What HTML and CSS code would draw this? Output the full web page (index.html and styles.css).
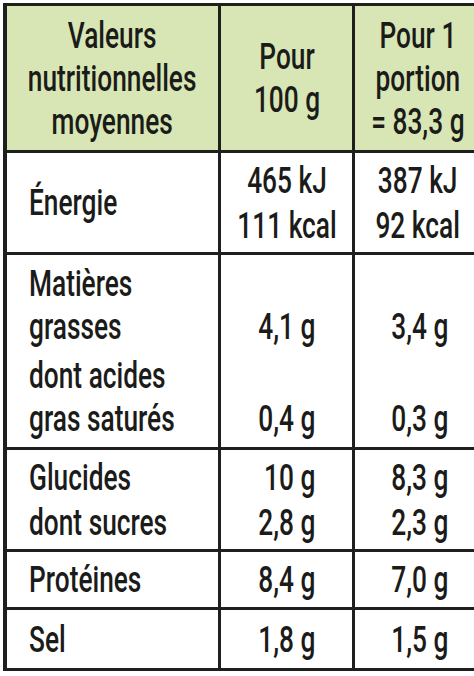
FILE: index.html
```html
<!DOCTYPE html>
<html lang="fr">
<head>
<meta charset="utf-8">
<title>Valeurs nutritionnelles</title>
<link rel="stylesheet" href="styles.css">
</head>
<body>
<div class="nt">
  <div class="c h"><div class="t ctr"><div>Valeurs</div><div>nutritionnelles</div><div>moyennes</div></div></div>
  <div class="c h"><div class="t ctr"><div>Pour</div><div>100 g</div></div></div>
  <div class="c h"><div class="t ctr"><div>Pour 1</div><div>portion</div><div>= 83,3 g</div></div></div>

  <div class="c"><div class="t lft"><div>Énergie</div></div></div>
  <div class="c"><div class="t ctr wide"><div>465 kJ</div><div>111 kcal</div></div></div>
  <div class="c"><div class="t ctr wide"><div>387 kJ</div><div>92 kcal</div></div></div>

  <div class="c"><div class="t lft"><div>Matières</div><div>grasses</div><div class="sp">dont acides</div><div>gras saturés</div></div></div>
  <div class="c"><div class="t r2"><div>&nbsp;</div><div>4,1 g</div><div class="sp">&nbsp;</div><div>0,4 g</div></div></div>
  <div class="c"><div class="t r3"><div>&nbsp;</div><div>3,4 g</div><div class="sp">&nbsp;</div><div>0,3 g</div></div></div>

  <div class="c"><div class="t lft wide"><div>Glucides</div><div>dont sucres</div></div></div>
  <div class="c"><div class="t r2 wide"><div>10 g</div><div>2,8 g</div></div></div>
  <div class="c"><div class="t r3 wide"><div>8,3 g</div><div>2,3 g</div></div></div>

  <div class="c"><div class="t lft"><div>Protéines</div></div></div>
  <div class="c"><div class="t r2"><div>8,4 g</div></div></div>
  <div class="c"><div class="t r3"><div>7,0 g</div></div></div>

  <div class="c"><div class="t lft"><div>Sel</div></div></div>
  <div class="c"><div class="t r2"><div>1,8 g</div></div></div>
  <div class="c"><div class="t r3"><div>1,5 g</div></div></div>
</div>
</body>
</html>
```

FILE: styles.css
```css
html, body {
  margin: 0;
  padding: 0;
  background: #ffffff;
  overflow: hidden;
}

.nt {
  display: grid;
  grid-template-columns: 211px 131px 126px;
  grid-template-rows: 144px 99px 192px 99px 55px 58px;
  gap: 3px;
  width: max-content;
  margin: 3px 0 0 3px;
  padding: 3px 3px 3px 4px;
  background: #1f1f1d;
  font-family: Roboto, "DejaVu Sans", sans-serif;
  font-weight: 500;
  font-size: 36.5px;
  line-height: 43px;
  color: #1b1b19;
}

.c {
  background: #ffffff;
  display: flex;
  flex-direction: column;
  justify-content: center;
  overflow: visible;
}

.c.h {
  background: #d7e6b4;
}

.t {
  white-space: nowrap;
  width: max-content;
  transform: scaleX(0.72);
}

.t.wide {
  line-height: 45px;
}

.t .sp {
  margin-top: 6px;
}

.ctr {
  align-self: center;
  text-align: center;
  transform-origin: center center;
}

.lft {
  align-self: flex-start;
  text-align: left;
  margin-left: 22px;
  transform-origin: left center;
}

.r2 {
  align-self: flex-end;
  text-align: right;
  margin-right: 37px;
  transform-origin: right center;
}

.r3 {
  align-self: flex-end;
  text-align: right;
  margin-right: 33px;
  transform-origin: right center;
}
```
